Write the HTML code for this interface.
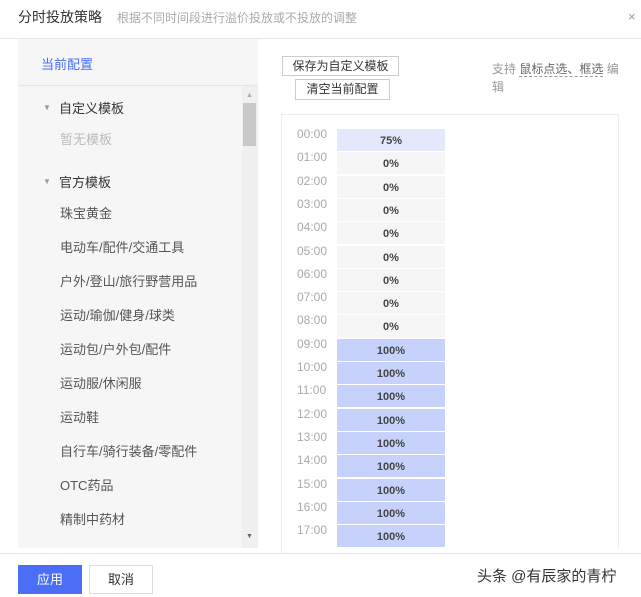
<!DOCTYPE html>
<html><head><meta charset="utf-8"><style>
*{margin:0;padding:0;box-sizing:border-box}
body{width:641px;height:597px;background:#fff;font-family:"Liberation Sans","Noto Sans CJK SC",sans-serif;position:relative;overflow:hidden;color:#333}
.a{position:absolute;white-space:nowrap}
.it{position:absolute;left:60px;font-size:13px;color:#555;line-height:16px}
.t{position:absolute;left:297px;font-size:12px;color:#aaa;font-family:"Liberation Sans",sans-serif}
.b{position:absolute;left:337px;width:108px;height:22px;font-size:11px;font-weight:bold;text-align:center;line-height:24px;color:#444}
</style></head><body>
<div class="a" style="left:18px;top:7px;font-size:14px;color:#333">分时投放策略</div>
<div class="a" style="left:117px;top:9px;font-size:12px;color:#aaa">根据不同时间段进行溢价投放或不投放的调整</div>
<div class="a" style="left:628px;top:9px;font-size:13px;color:#999">×</div>
<div class="a" style="left:0;top:38px;width:641px;height:1px;background:#e8e8e8"></div>
<div class="a" style="left:18px;top:39px;width:240px;height:509px;background:#f6f6f6"></div>
<div class="a" style="left:18px;top:85px;width:240px;height:1px;background:#e6e6e6"></div>
<div class="a" style="left:41px;top:54px;font-size:13px;color:#4a6ef5">当前配置</div>
<div class="a" style="left:242px;top:86px;width:16px;height:462px;background:#f0f0f0"></div>
<div class="a" style="left:243px;top:103px;width:13px;height:43px;background:#c8c8c8"></div>
<div class="a" style="left:246px;top:92px;font-size:7px;color:#aaa">▲</div>
<div class="a" style="left:246px;top:533px;font-size:7px;color:#666">▼</div>
<div class="a" style="left:43px;top:103px;font-size:8px;color:#999">▼</div>
<div class="it" style="left:59px;top:101px;color:#333">自定义模板</div>
<div class="it" style="top:132px;color:#bbb">暂无模板</div>
<div class="a" style="left:43px;top:177px;font-size:8px;color:#999">▼</div>
<div class="it" style="left:59px;top:175px;color:#333">官方模板</div>
<div class="it" style="top:206px">珠宝黄金</div>
<div class="it" style="top:240px">电动车/配件/交通工具</div>
<div class="it" style="top:274px">户外/登山/旅行野营用品</div>
<div class="it" style="top:308px">运动/瑜伽/健身/球类</div>
<div class="it" style="top:342px">运动包/户外包/配件</div>
<div class="it" style="top:376px">运动服/休闲服</div>
<div class="it" style="top:410px">运动鞋</div>
<div class="it" style="top:444px">自行车/骑行装备/零配件</div>
<div class="it" style="top:478px">OTC药品</div>
<div class="it" style="top:512px">精制中药材</div>
<div class="a" style="left:282px;top:56px;width:117px;height:20px;border:1px solid #ccc;font-size:12px;text-align:center;line-height:18px">保存为自定义模板</div>
<div class="a" style="left:295px;top:79px;width:95px;height:21px;border:1px solid #ccc;font-size:12px;text-align:center;line-height:19px">清空当前配置</div>
<div class="a" style="left:492px;top:60px;font-size:12px;color:#999">支持 <span style="color:#666;border-bottom:1px dashed #999">鼠标点选、框选</span> 编</div>
<div class="a" style="left:492px;top:78px;font-size:12px;color:#999">辑</div>
<div class="a" style="left:281px;top:114px;width:338px;height:440px;border:1px solid #ececec;border-bottom:none"></div>
<div class="a" style="left:0;top:553px;width:641px;height:1px;background:#e6e6e6"></div>
<div class="a" style="left:18px;top:565px;width:64px;height:29px;background:#4a6ef5;color:#fff;font-size:13px;text-align:center;line-height:29px">应用</div>
<div class="a" style="left:89px;top:565px;width:64px;height:29px;border:1px solid #ddd;font-size:13px;text-align:center;line-height:27px">取消</div>
<div class="a" style="left:477px;top:565px;font-size:15px;color:#333">头条 @有辰家的青柠</div>
<div id="g"></div>
<script>
var h='';for(var i=0;i<18;i++){var y=129+i*23.3;var v=i==0?'75%':(i<9?'0%':'100%');var c=i==0?'#e3e8fd':(i<9?'#f5f5f5':'#c6d2fc');
h+='<div class="t" style="top:'+(y-2)+'px">'+(i<10?'0':'')+i+':00</div><div class="b" style="top:'+y+'px;background:'+c+'">'+v+'</div>';}
document.getElementById('g').innerHTML=h;
</script>
<div class="a" style="left:282px;top:548px;width:337px;height:5px;background:#fff"></div>
</body></html>
